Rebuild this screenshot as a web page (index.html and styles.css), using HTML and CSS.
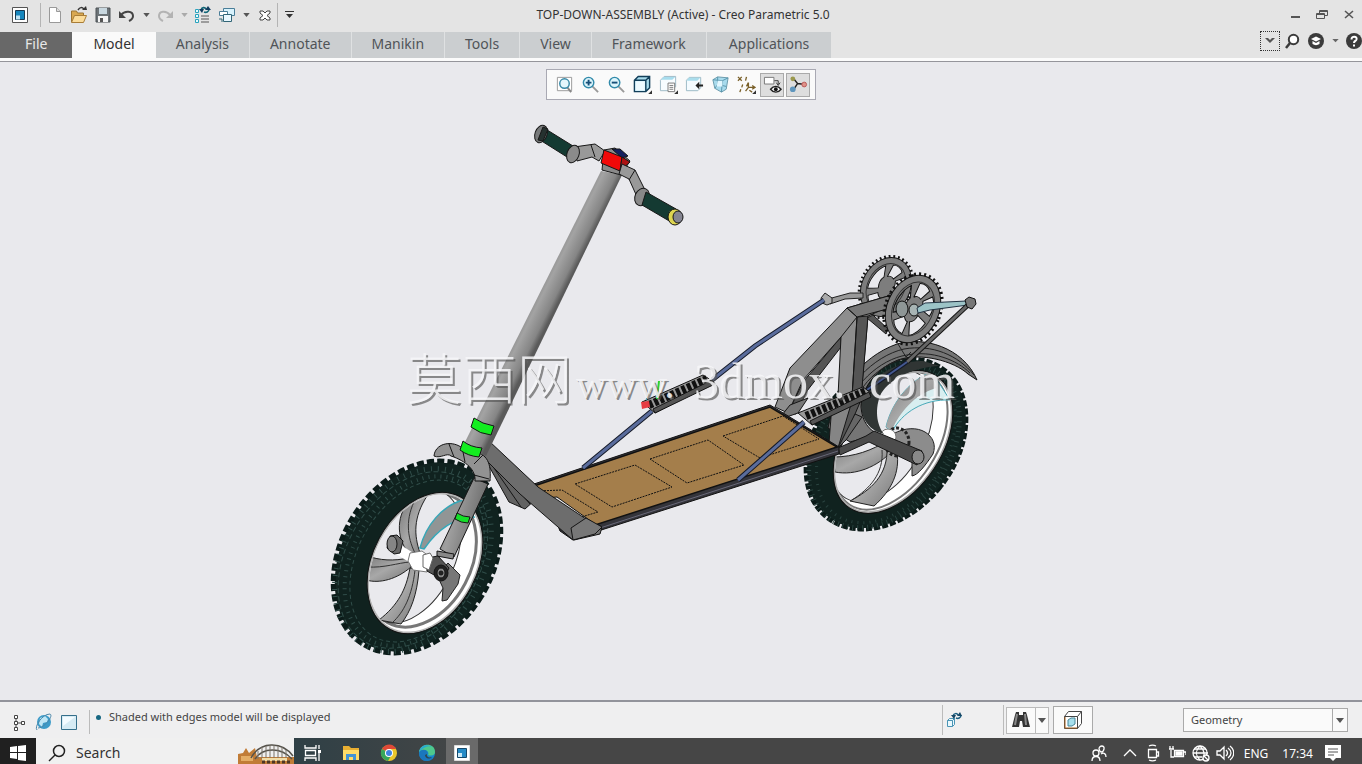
FILE: index.html
```html
<!DOCTYPE html>
<html lang="en">
<head>
<meta charset="utf-8">
<title>TOP-DOWN-ASSEMBLY (Active) - Creo Parametric 5.0</title>
<link rel="stylesheet" href="styles.css">
</head>
<body>
<div class="app">
  <header class="titlebar">
    <div class="quick">
      <button class="app-icon" aria-label="Application menu"><svg viewBox="0 0 18 18" width="18" height="18"><path d="M1.500 1.500h15v15h-15z" fill="#fff" stroke="#555"/><path d="M4.500 4.500h9v9h-9z" fill="#1686bd" stroke="#173a52"/><path d="M5 9.500h4v4H5z" fill="#bfe4f5"/></svg></button>
      <span class="rule"></span>
      <button class="tool" aria-label="New"><svg viewBox="0 0 18 18" width="18" height="18"><path d="M3.500 1.500h7l4 4v11h-11z" fill="#fff" stroke="#999"/><path d="M10.500 1.500v4h4" fill="#ddd" stroke="#999"/></svg></button>
      <button class="tool" aria-label="Open"><svg viewBox="0 0 18 18" width="18" height="18"><path d="M1.500 16V5h5l1 2h6v3" fill="#d9a850" stroke="#9b7432"/><path d="M1.500 16.500l3-7h12l-3 7z" fill="#fbdc9a" stroke="#a97d37"/><path d="M8 4c2-3 4-3 6-1" fill="none" stroke="#333" stroke-width="1.500"/><path d="M12 4h5l-1-4z" fill="#333"/></svg></button>
      <button class="tool" aria-label="Save"><svg viewBox="0 0 18 18" width="18" height="18"><path d="M2 2h14v14H2z" fill="#6c7377" stroke="#4d5357"/><path d="M5 2h8v6H5z" fill="#c8d7df"/><path d="M4 10h10v6H4z" fill="#f4f4f4"/><path d="M6 12h3v4H6z" fill="#555"/></svg></button>
      <button class="tool" aria-label="Undo"><svg viewBox="0 0 18 18" width="18" height="18"><path d="M3 9c4-5 12-4 12 1 0 3-2 4-4 5" fill="none" stroke="#444" stroke-width="2"/><path d="M1 5v7h7z" fill="#444"/></svg></button>
      <button class="drop" aria-label="Undo list"><svg viewBox="0 0 8 5" width="7" height="4"><path d="M0 0h8L4 5z" fill="#555"/></svg></button>
      <button class="tool" aria-label="Redo"><svg viewBox="0 0 18 18" width="18" height="18"><path d="M14 9C10 4 3 5 3 10c0 3 2 4 4 5" fill="none" stroke="#b3b3b3" stroke-width="2"/><path d="M17 5v7h-7z" fill="#b3b3b3"/></svg></button>
      <button class="drop" aria-label="Redo list"><svg viewBox="0 0 8 5" width="7" height="4"><path d="M0 0h8L4 5z" fill="#aaa"/></svg></button>
      <button class="tool" aria-label="Regenerate"><svg viewBox="0 0 18 18" width="18" height="18"><path d="M1.500 3.500h3v3h-3zM1.500 8.500h3v3h-3zM1.500 13.500h3v3h-3z" fill="#e8fbff" stroke="#2aa3bd"/><path d="M7 10h8M7 13h8M7 16h8" stroke="#555"/><path d="M7 4c1-3 4-3 5-1M15 3c0 3-3 4-5 3" fill="none" stroke="#167" stroke-width="1.600"/><path d="M11 4h6l-3-4zM5 3h5L8 7z" fill="#123e60"/></svg></button>
      <button class="tool" aria-label="Windows"><svg viewBox="0 0 18 18" width="18" height="18"><path d="M5.500 2.500h11v7h-11z" fill="#d8f2fc" stroke="#4a7e99"/><path d="M1.500 5.500h8v4h-8z" fill="#fff" stroke="#4a7e99"/><path d="M5.500 8.500h8v7h-8z" fill="#e9f8ff" stroke="#367"/><path d="M1 13h3v3" fill="none" stroke="#367"/></svg></button>
      <button class="drop" aria-label="Window list"><svg viewBox="0 0 8 5" width="7" height="4"><path d="M0 0h8L4 5z" fill="#555"/></svg></button>
      <button class="tool" aria-label="Close window"><svg viewBox="0 0 18 18" width="18" height="18"><path d="M4 5h3l2 2 2-2h3v2l-3 2.500 3 2.500v2h-3l-2-2-2 2H4v-2l3-2.500L4 7z" fill="#fff" stroke="#444"/></svg></button>
      <span class="rule short"></span>
      <button class="drop" aria-label="Customize"><svg viewBox="0 0 9 9" width="9" height="9"><path d="M0 1h9v1H0zM1 4h7L4.500 8z" fill="#333"/></svg></button>
    </div>
    <h1 class="title">TOP-DOWN-ASSEMBLY (Active) - Creo Parametric 5.0</h1>
    <div class="window-buttons">
      <button aria-label="Minimize"><svg viewBox="0 0 12 12" width="12" height="12"><path d="M2 8h9" stroke="#555" stroke-width="2"/></svg></button>
      <button aria-label="Restore"><svg viewBox="0 0 12 12" width="12" height="12"><path d="M3.500 4V1.500h8v5H9M.500 4.500h8v5h-8zM.500 5.500h8M3.500 2.500h8" fill="none" stroke="#555"/></svg></button>
      <button aria-label="Close"><svg viewBox="0 0 12 12" width="12" height="12"><path d="M2 2l8 7M10 2l-8 7" stroke="#555" stroke-width="1.600"/></svg></button>
    </div>
  </header>
  <nav class="ribbon">
    <div class="tabs">
      <button class="tab file">File</button><button class="tab active">Model</button><button class="tab">Analysis</button><button class="tab">Annotate</button><button class="tab">Manikin</button><button class="tab">Tools</button><button class="tab">View</button><button class="tab">Framework</button><button class="tab last">Applications</button>
    </div>
    <div class="ribbon-tools">
      <button class="collapse" aria-label="Show ribbon"><svg viewBox="0 0 12 8" width="12" height="8"><path d="M1 1h3l2 2 2-2h3L6 6z" fill="#555"/></svg></button>
      <button class="tool" aria-label="Search commands"><svg viewBox="0 0 16 16" width="16" height="16"><circle cx="9.500" cy="6.500" r="4.700" fill="#fff" stroke="#3b3b3b" stroke-width="2"/><path d="M6 10l-4 5" stroke="#3b3b3b" stroke-width="2.500"/></svg></button>
      <button class="tool" aria-label="Learning"><svg viewBox="0 0 16 16" width="16" height="16"><circle cx="8" cy="8" r="8" fill="#3b3b3b"/><path d="M8 3.500l5 2.500-5 2.500L3 6z" fill="#fff"/><path d="M4.500 8v3c2 1.500 5 1.500 7 0V8L8 10z" fill="#fff"/></svg></button>
      <button class="drop" aria-label="Learning list"><svg viewBox="0 0 8 5" width="7" height="4"><path d="M0 0h8L4 4z" fill="#666"/></svg></button>
      <button class="tool" aria-label="Help"><svg viewBox="0 0 16 16" width="16" height="16"><circle cx="8" cy="8" r="8" fill="#3b3b3b"/><path d="M5.500 6.500c0-4 6-3.500 5 0C10 8 8 8 8 10" fill="none" stroke="#fff" stroke-width="2"/><path d="M7 11.500h2v2H7z" fill="#fff"/></svg></button>
    </div>
  </nav>

  <main class="canvas">
    <svg class="model" viewBox="0 62 1362 638" role="img" aria-label="Scooter assembly">
      <defs>
        <linearGradient id="tube" x1="0" y1="0" x2="1" y2=".4"><stop offset="0" stop-color="#777"/><stop offset=".4" stop-color="#9f9f9f"/><stop offset="1" stop-color="#666"/></linearGradient>
        <linearGradient id="stem" gradientUnits="userSpaceOnUse" x1="532" y1="295" x2="556" y2="307"><stop offset="0" stop-color="#858585"/><stop offset=".35" stop-color="#a3a3a3"/><stop offset=".8" stop-color="#858585"/><stop offset="1" stop-color="#5a5a5a"/></linearGradient>
        <linearGradient id="blade" x1="0" y1="0" x2="1" y2="1"><stop offset="0" stop-color="#777"/><stop offset=".5" stop-color="#a8a8a8"/><stop offset="1" stop-color="#777"/></linearGradient>
        <clipPath id="front-open"><ellipse cx="425" cy="563" rx="50" ry="73" transform="rotate(28 425 563)"/></clipPath>
        <clipPath id="rear-open"><ellipse cx="893" cy="442" rx="47" ry="77" transform="rotate(33.500 893 442)"/></clipPath>
        <g id="ring">
          <ellipse rx="27" ry="36" fill="none" stroke="#111" stroke-width="4" stroke-dasharray="2 3"/>
          <path fill-rule="evenodd" d="M-26 0a26 35 0 1 0 52 0a26 35 0 1 0-52 0zM-4-26C0-28 5-27 8-23L3-12C0-14-3-13-4-11zM13-19C18-14 19-5 18 0L8-3C8-7 7-9 6-11zM17 8C15 17 11 23 7 26L2 13C5 12 7 8 7 4zM0 27C-6 27-11 23-13 18L-5 10C-3 13-1 14 0 14zM-17 11C-20 2-18-13-11-21L-7-9C-9-5-9 0-7 5z" fill="#7d7d7d" stroke="#111"/>
          <ellipse rx="20" ry="28" fill="none" stroke="#333"/>
        </g>
      </defs>

      <!-- rear wheel -->
      <g>
        <ellipse cx="886" cy="444" rx="68" ry="93" transform="rotate(39 886 444)" fill="#10221f" stroke="#0b1a18" stroke-width="7" stroke-dasharray="6 2"/>
        <ellipse cx="887" cy="444" rx="68" ry="93" transform="rotate(39 887 444)" fill="#10221f"/>
        <g fill="none" stroke="#29433f">
          <ellipse cx="884" cy="446" rx="64" ry="91" transform="rotate(38 884 446)" stroke-width="5" stroke-dasharray="1 4"/>
          <ellipse cx="886" cy="445" rx="59" ry="86" transform="rotate(36 886 445)" stroke-width="3" stroke-dasharray="1 5"/>
        </g>
        <ellipse cx="893" cy="442" rx="49" ry="79" transform="rotate(33.500 893 442)" fill="#aaa" stroke="#111"/>
        <g clip-path="url(#rear-open)">
          <path d="M820 350h150v180H820z" fill="#fff"/>
          <ellipse cx="891" cy="441" rx="46" ry="76" transform="rotate(33 891 441)" fill="none" stroke="#777" stroke-width="2"/>
          <ellipse cx="882" cy="436" rx="42" ry="72" transform="rotate(30 882 436)" fill="#e9e9ed" stroke="#333"/>
          <path d="M886 427C892 400 913 378 932 372L950 400C924 399 902 412 892 432z" fill="#d8eef0" stroke="#48a9b8"/>
          <path d="M886 427C892 400 913 378 932 372L936 388C914 395 900 412 892 430z" fill="url(#blade)"/>
          <path d="M833 457C855 457 872 450 887 441L893 450C878 467 855 476 835 472z" fill="url(#blade)" stroke="#222"/>
          <path d="M887 448C888 475 871 490 850 501L874 506C892 490 900 472 897 452z" fill="url(#blade)" stroke="#222"/>
          <path d="M882 450C884 474 869 489 852 500" fill="none" stroke="#333"/>
          <path d="M893 434C918 420 940 436 933 454C925 466 918 475 912 476L912 460 900 449z" fill="#8c8c8c" stroke="#222"/>
          <ellipse cx="897" cy="442" rx="12" ry="14" fill="none" stroke="#222" stroke-width="3" stroke-dasharray="3 2"/>
          <ellipse cx="888" cy="437" rx="8" ry="8" fill="#fff" stroke="#777"/>
        </g>
        <path d="M863 393C872 376 900 360 923 361L940 366C910 367 886 382 880 396 874 412 878 427 884 434 862 429 858 407 863 393z" fill="#303534"/>
      </g>

      <!-- mudguard -->
      <path d="M828 428C835 393 860 357 897 344 923 336 963 347 977 380L968 374C954 361 920 352 898 360 875 369 861 390 861 407 862 421 869 431 879 434L850 442z" fill="#757575" stroke="#111"/>
      <path d="M834 423C843 388 873 356 904 349 932 344 958 355 974 375M844 418C850 386 880 359 907 355 932 350 957 360 970 373M853 417C852 388 884 360 910 358" fill="none" stroke="#222"/>

      <!-- cranks behind the frame -->
      <use href="#ring" transform="translate(886 287) rotate(28) scale(.920 .880)"/>
      <path d="M863 293L850 293 828 299 830 304 845 299 863 298z" fill="#999" stroke="#222"/>
      <path d="M821 298l4-5 7 5 0 5-5 2-5-2z" fill="#aaa" stroke="#222"/>

      <!-- rear frame -->
      <g stroke="#161616" stroke-linejoin="round">
        <path d="M803 382L841 337 841 347 807 391 796 414 788 413z" fill="#555"/>
        <path d="M847 308L790 368 775 407 788 413 803 380 841 337 838 396 829 443 839 447 856 408 862 385 868 316 895 304 895 294z" fill="#8e8e8e"/>
        <path d="M857 317L868 316 861 400 841 447 834 446 852 397z" fill="#555"/>
        <path d="M847 308L857 317 891 308 895 294z" fill="#777"/>
        <path d="M847 308L857 317 852 397M841 337L857 317" fill="none"/>
        <path d="M867 318L886 334 888 329 873 315z" fill="#555"/>
        <path d="M798 413L778 420 790 405 808 398z" fill="#777"/>
        <path d="M829 443L832 404 852 401 838 448z" fill="#858585"/>
        <path d="M855 414L862 417 846 440 838 448z" fill="#666"/>
        <path d="M838 448L866 436 874 431 922 451 917 465 869 442 840 455z" fill="#4c4c4c"/>
        <ellipse cx="918" cy="457" rx="6" ry="7" fill="#888"/>
      </g>
      <use href="#ring" transform="translate(913 309) rotate(24)"/>
      <ellipse cx="902" cy="309" rx="6" ry="8" fill="#8e9696" stroke="#111"/>
      <ellipse cx="914" cy="310" rx="5" ry="6" fill="#a8b4b4" stroke="#111"/>
      <path d="M917 308L925 303 967 301 968 305 930 310 918 313z" fill="#9cc3c7" stroke="#234"/>
      <path d="M968 305L907 362" stroke="#151515" stroke-width="5"/><path d="M968 305L907 362" stroke="#666" stroke-width="3"/>
      <path d="M907 362L864 392" stroke="#151a28" stroke-width="4"/><path d="M907 362L864 392" stroke="#435890" stroke-width="2"/>
      <path d="M965 300l4-3 6 2 1 5-4 5-5-2z" fill="#777" stroke="#111"/>
      <path d="M898 344l8 13 5-5" fill="none" stroke="#222"/>

      <!-- deck -->
      <g stroke="#111">
        <path d="M545 493L531 485 770 405 839 447 839 454 595 532 573 540 560 531z" fill="#34343a"/>
        <path d="M572 523L586 517 602 527 600 534 574 540z" fill="#777"/>
        <path d="M531 487L770 407 837 447 595 525z" fill="#a47e4b" stroke-width="1.500"/>
        <path d="M545 498L557 497 592 522 573 521z" fill="#e9e9ed"/>
        <path d="M597 529L838 451" stroke="#686878"/>
        <g fill="none" stroke-dasharray="2 1"><path d="M575 484L635 465 672 487 612 507zM650 459L708 440 744 465 687 483zM723 436L783 416 819 439 760 458zM538 491L562 490 598 512 578 518"/></g>
      </g>

      <!-- pedals and connecting rods -->
      <g fill="none">
        <g stroke="#151a28" stroke-width="5"><path d="M824 300L755 346 712 380M652 411L583 468M804 422L738 480"/></g>
        <g stroke="#5a6c9c" stroke-width="3"><path d="M824 300L755 346 712 380M652 411L583 468M804 422L738 480"/></g>
      </g>
      <g stroke="#111">
        <path d="M642 402L703 375 714 382 655 413z" fill="#999"/>
        <path d="M798 413L863 387 871 393 812 425z" fill="#999"/>
        <path d="M649 405L707 379M806 416L866 391" stroke-width="8" stroke-dasharray="4 2"/>
        <path d="M655 413L715 384 712 380 653 409zM812 425L871 397 869 392 810 421z" fill="#555"/>
      </g>
      <path d="M641 402l8-1 1 6-8 2z" fill="#e63b42"/><path d="M657 399L659 381" stroke="#30d330" stroke-width="2"/><path d="M646 400L651 388" stroke="#4fa3ba"/>

      <!-- front wheel -->
      <ellipse cx="417" cy="557" rx="74" ry="101" transform="rotate(31.500 417 557)" fill="#10221f" stroke="#0b1b19" stroke-width="8" stroke-dasharray="7 3"/>
      <ellipse cx="418" cy="557" rx="74" ry="101" transform="rotate(31.500 418 557)" fill="#10221f"/>
      <g fill="none" stroke="#304d49">
        <ellipse cx="413" cy="560" rx="70" ry="98" transform="rotate(31 413 560)" stroke-width="5" stroke-dasharray="1 6"/>
        <ellipse cx="413" cy="560" rx="66" ry="95" transform="rotate(31 413 560)" stroke-dasharray="5 3"/>
        <ellipse cx="415" cy="561" rx="62" ry="91" transform="rotate(30 415 561)" stroke-width="4" stroke-dasharray="1 5"/>
        <ellipse cx="417" cy="561" rx="59" ry="87" transform="rotate(30 417 561)" stroke-dasharray="4 3"/>
      </g>
      <ellipse cx="425" cy="563" rx="52" ry="75" transform="rotate(28 425 563)" fill="#b5b5b5" stroke="#111"/>
      <g clip-path="url(#front-open)">
        <path d="M360 485h130v155H360z" fill="#fff"/>
        <ellipse cx="421" cy="560" rx="50" ry="71" transform="rotate(28 421 560)" fill="none" stroke="#777" stroke-width="3"/>
        <ellipse cx="412" cy="556" rx="43" ry="71" transform="rotate(25 412 556)" fill="#e9e9ed" stroke="#333"/>
        <path d="M408 502L427 496C413 518 414 535 420 553L411 556C396 540 396 518 408 502z" fill="url(#blade)" stroke="#222"/>
        <path d="M416 498C405 518 407 537 415 553" fill="none" stroke="#333"/>
        <path d="M365 555C380 561 394 561 409 558L411 567C397 579 380 584 366 580z" fill="url(#blade)" stroke="#222"/>
        <path d="M367 567C385 568 397 563 410 562" fill="none" stroke="#333"/>
        <path d="M410 568L419 570C417 595 411 611 401 624L379 620C398 605 406 590 410 568z" fill="url(#blade)" stroke="#222"/>
        <path d="M415 570C412 596 404 612 392 623" fill="none" stroke="#333"/>
        <path d="M448 563L460 575 458 584 447 600 442 601 443 588 437 575z" fill="#777" stroke="#222"/>
        <path d="M420 548C426 525 442 506 463 500L474 517C450 518 435 533 424 549z" fill="#919595" stroke="#36a7b8" stroke-width="1.500"/>
      </g>
      <g stroke="#161616">
        <path d="M396 548L412 558" stroke="#fff" stroke-width="10"/>
        <path d="M390 536l7-1 6 6-3 12-6 1-7-6z" fill="#686868"/><ellipse cx="392" cy="544" rx="5" ry="8" fill="#858585"/>
        <path d="M410 553L422 551 430 557 427 572 413 570 408 561z" fill="#fff" stroke="#777"/>
        <path d="M474 478L488 484 454 557 440 549z" fill="url(#tube)"/>
        <path d="M437 551l17 3-1 5-16-3z" fill="#888"/>
        <path d="M427 558L438 556 449 568 443 580 427 571z" fill="#555"/>
        <path d="M423 555L430 553 433 558 429 570 423 567z" fill="#fff" stroke="#666"/>
        <ellipse cx="441" cy="573" rx="7" ry="8" fill="#222"/><ellipse cx="441" cy="573" rx="4" ry="5" fill="#888"/><circle cx="441" cy="573" r="2" fill="#222"/>
        <path d="M457 513Q463 517 470 517L468 523Q461 523 455 519z" fill="#14df28"/>
      </g>

      <!-- front frame -->
      <g stroke="#151515" stroke-linejoin="round">
        <path d="M480 450L509 502 525 509 535 500 495 460z" fill="#626262"/>
        <path d="M485 455L521 507M488 455L530 504" fill="none"/>
        <path d="M482 438L489 441 538 487 586 519 573 540 520 494 478 452z" fill="#6d6d6d"/>
        <path d="M571 528L586 518 602 527 595 534 573 540z" fill="#777"/>
        <path d="M434 456C435 444 450 440 461 447L474 452C490 454 491 468 490 481L475 481C476 470 466 461 451 456 447 452 441 459 434 456z" fill="#929292"/>
        <path d="M449 444L454 457M462 447L465 462M483 455L474 464M474 475L489 479" fill="none"/>
        <path d="M601 171L622 175 486 456 463 446z" fill="url(#stem)" stroke="none"/>
        <path d="M474 418Q482 424 494 426L491 435Q480 434 471 427z" fill="#13ed20"/>
        <path d="M463 441Q470 447 482 448L479 457Q468 456 460 450z" fill="#13ed20"/>
      </g>

      <!-- handlebar -->
      <g stroke="#171717" stroke-linejoin="round">
        <path d="M544 128L573 146 567 157 540 140z" fill="#143a32"/>
        <ellipse cx="541" cy="134" rx="6" ry="9" transform="rotate(20 541 134)" fill="#77797a"/><path d="M543 127l5 2-5 12-5-1z" fill="#25312f"/>
        <path d="M574 147L595 144 605 151 599 161 592 157 577 161z" fill="#999"/><path d="M591 145L595 157" fill="none"/>
        <ellipse cx="573" cy="154" rx="6" ry="9" transform="rotate(20 573 154)" fill="#8b8b8b"/>
        <path d="M604 150L615 148 630 161 621 175 602 170z" fill="#8a8a8a"/>
        <path d="M612 149L620 149 628 156 622 158z" fill="#14205f"/>
        <path d="M604 150L622 157 620 171 601 163z" fill="#f20909"/><path d="M622 157L630 162 620 171z" fill="#ad1111"/>
        <path d="M622 164L635 170 645 190 638 199 629 179 619 174z" fill="#999"/><path d="M635 170L629 180" fill="none"/>
        <ellipse cx="642" cy="197" rx="7" ry="9" transform="rotate(25 642 197)" fill="#888"/>
        <path d="M646 192L676 209 671 222 642 205z" fill="#143a32"/>
        <ellipse cx="675" cy="217" rx="7" ry="8" fill="#ddd450"/><ellipse cx="678" cy="217" rx="5" ry="6" fill="#858591"/>
      </g>

      <g class="watermark shadow" aria-hidden="true"><text x="409" y="401" class="cjk">莫西网</text><text x="578" y="400" class="small">www.</text><text x="696" y="400">3dmox.</text><text x="871" y="400">com</text></g>
      <g class="watermark"><text x="407" y="399" class="cjk">莫西网</text><text x="576" y="398" class="small">www.</text><text x="694" y="398">3dmox.</text><text x="869" y="398">com</text></g>
    </svg>

    <div class="view-tools">
      <button aria-label="Refit"><svg viewBox="0 0 20 20"><path d="M2.500 2.500h15v14h-15z" fill="#fff" stroke="#999"/><path d="M13 13l4 5" stroke="#888" stroke-width="2"/><circle cx="10" cy="9" r="5" fill="#e4f7fd" stroke="#3789a7" stroke-width="1.500"/></svg></button>
      <button aria-label="Zoom in"><svg viewBox="0 0 20 20"><path d="M12 12l6 6" stroke="#999" stroke-width="2"/><circle cx="8" cy="8" r="5.500" fill="#ddf5fc" stroke="#318aaa" stroke-width="1.500"/><path d="M5 8h6M8 5v6" stroke="#164f78" stroke-width="2"/></svg></button>
      <button aria-label="Zoom out"><svg viewBox="0 0 20 20"><path d="M12 12l6 6" stroke="#999" stroke-width="2"/><circle cx="8" cy="8" r="5.500" fill="#ddf5fc" stroke="#318aaa" stroke-width="1.500"/><path d="M5 8h6" stroke="#164f78" stroke-width="2"/></svg></button>
      <button aria-label="Display style"><svg viewBox="0 0 20 20"><path d="M1.500 5.500l4-4h12v12l-4 4h-12zM1.500 5.500h12v12M13.500 5.500l4-4" fill="#a9dced" stroke="#123f5a" stroke-width="1.500"/><path d="M2.500 6.500h10v10h-10z" fill="#eefaff"/><path d="M20 16v4h-4z" fill="#333"/></svg></button>
      <button aria-label="Saved orientations"><svg viewBox="0 0 20 20"><path d="M1.500 5.500l4-4h12v11l-4 4h-12z" fill="#f7fcff" stroke="#9cb7c5"/><path d="M5 2h12l-3 3H2z" fill="#a7dced"/><path d="M9.500 8.500h7v9h-7z" fill="#fff" stroke="#777"/><path d="M11 11h4M11 13h4M11 15h4" stroke="#777"/><path d="M20 16v4h-4z" fill="#333"/></svg></button>
      <button aria-label="View manager"><svg viewBox="0 0 20 20"><path d="M1.500 5.500l3-3h12v11l-3 3h-12z" fill="#f4fbff" stroke="#9bb9c5"/><path d="M4 3h12l-3 3H2z" fill="#aaddec"/><path d="M11 11l4-4v3h4v2h-4v3z" fill="#222"/></svg></button>
      <button aria-label="Perspective"><svg viewBox="0 0 20 20"><path d="M2 5l5-3 11 1-2 12-5 3-7-4z" fill="#a8dbed" stroke="#6798aa"/><path d="M2 5l10 1-1 12M12 6l6-3M7 2v8l-3 4M7 10l9 2" fill="none" stroke="#5795ac"/><path d="M7 6h5v6H6z" fill="#e2f7ff"/></svg></button>
      <button aria-label="Datum display"><svg viewBox="0 0 20 20"><path d="M1 2l4 4M5 2L1 6M10 2l-1 4M6 10l-1 3M4 15l-1 3M12 8l-2 4M9 17l3-4h6M12 13V8M16 11l3 2-3 2M13 16l3 2" fill="none" stroke="#7a6029" stroke-width="1.400"/><path d="M20 16v4h-4z" fill="#333"/></svg></button>
      <button class="on" aria-label="Annotation display"><svg viewBox="0 0 20 20"><path d="M1.500 2.500h10v7h-10z" fill="#fff" stroke="#777"/><path d="M12 6h4v4M14 8l2 3 2-3" fill="none" stroke="#333"/><path d="M8 15c3-4 8-4 11 0-3 4-8 4-11 0z" fill="#fff" stroke="#222" stroke-width="1.500"/><circle cx="13.500" cy="15" r="2" fill="#111"/></svg></button>
      <button class="on" aria-label="Spin center"><svg viewBox="0 0 20 20"><path d="M5 4l4 5-4 6M9 9l8 1" fill="none" stroke="#222" stroke-width="1.500"/><circle cx="4" cy="4" r="2.500" fill="#9b994d"/><circle cx="4" cy="15" r="3" fill="#5f96bd"/><circle cx="16" cy="10" r="2.500" fill="#df9288" stroke="#b55"/></svg></button>
    </div>
  </main>

  <footer class="status">
    <div class="status-icons">
      <button aria-label="Model tree"><svg viewBox="0 0 16 18" width="16" height="18"><path d="M3.500 2.500h3v3h-3zM3.500 8.500h3v3h-3zM3.500 14.500h3v3h-3zM10.500 8.500h3v3h-3z" fill="#fff" stroke="#444"/><path d="M5 6v2M5 12v2M7 10h3" stroke="#444"/></svg></button>
      <button aria-label="Browser"><svg viewBox="0 0 18 18" width="18" height="18"><circle cx="9" cy="9" r="7" fill="#3d9bc8"/><path d="M5 5l5-2 3 3-1 3-4 1-1 4-3-3z" fill="#bfe6f5"/><path d="M2 17C-1 14 7 1 15 1c4 2-6 14-12 14" fill="none" stroke="#4a87aa"/></svg></button>
      <button aria-label="Full screen"><svg viewBox="0 0 18 18" width="18" height="18"><path d="M1.500 2.500h15v14h-15z" fill="#d6ebf4" stroke="#356f8b"/><path d="M3 4h12L3 13z" fill="#f3fbff"/></svg></button>
    </div>
    <p class="message"><span class="dot"></span>Shaded with edges model will be displayed</p>
    <div class="status-tools">
      <div class="regen"><button aria-label="Regeneration status"><svg viewBox="0 0 18 18" width="18" height="18"><path d="M1.500 9.500l2-2h5v6l-2 2h-5zM1.500 9.500h5v6M6.500 9.500l2-2" fill="#eaf8fd" stroke="#4994b5"/><path d="M7 5c1-3 4-3 5-1M15 4c0 3-3 4-5 3" fill="none" stroke="#185c7f" stroke-width="1.500"/><path d="M11 5h5l-2-4zM5 4h5L8 8z" fill="#164766"/></svg></button></div>
      <div class="find"><button aria-label="Find"><svg viewBox="0 0 18 18" width="18" height="18"><path d="M4 1h3v3h4V1h3l1 3 3 12h-7l-1-6H8l-1 6H0L3 4z" fill="#333"/><path d="M5 3L3 14M13 3l1 11" stroke="#888" stroke-width="2"/></svg></button><button class="find-drop" aria-label="Find options"><svg viewBox="0 0 8 5" width="8" height="5"><path d="M0 0h8L4 5z" fill="#555"/></svg></button></div>
      <button class="box" aria-label="Selection box"><svg viewBox="0 0 20 20" width="20" height="20"><path d="M1.500 6.500l4-5h13v12l-4 5h-13zM1.500 6.500h13v12M14.500 6.500l4-5" fill="#fff" stroke="#444"/><path d="M5 10l3-2h4v6l-3 2H5z" fill="#a7dfec" stroke="#478496"/><path d="M2 18h12M2 7v11" stroke="#a96523"/></svg></button>
      <div class="filter"><select aria-label="Selection filter"><option>Geometry</option></select><span class="filter-arrow"><svg viewBox="0 0 8 5" width="8" height="5"><path d="M0 0h8L4 5z" fill="#555"/></svg></span></div>
    </div>
  </footer>

  <div class="taskbar">
    <button class="start" aria-label="Start"><svg viewBox="0 0 16 16" width="16" height="16"><path d="M0 2l7-1v6H0zM8 1l8-1v7H8zM0 8h7v6l-7-1zM8 8h8v8l-8-1z" fill="#fff"/></svg></button>
    <label class="search"><svg viewBox="0 0 18 18" width="18" height="18"><circle cx="11" cy="7" r="5.500" fill="none" stroke="#222" stroke-width="1.500"/><path d="M7 11l-6 6" stroke="#222" stroke-width="1.500"/></svg><input type="text" placeholder="Search" aria-label="Search"><svg class="bridge" viewBox="0 0 56 20" width="56" height="20"><path d="M0 20V10l5-1 3-5 3 5 6-5 2 9h37v7z" fill="#c17c36"/><path d="M3 12h12v5H3z" fill="#e4ad65"/><path d="M13 14C22-3 44-3 55 12M17 15C25 3 43 3 54 15" fill="none" stroke="#55524b" stroke-width="1.500"/><path d="M20 7v8M24 3v12M28 2v12M32 1v13M36 1v13M40 2v12M44 3v12M48 6v9" stroke="#7a746b"/><path d="M24 14h25v3H24z" fill="#f1dda7"/><path d="M24 18h30" stroke="#4d3726" stroke-width="3" stroke-dasharray="3 2"/></svg></label>
    <div class="tasks">
      <button aria-label="Task view"><svg viewBox="0 0 18 18" width="18" height="18"><path d="M1 1v3h11V1M1 17v-3h11v3M1.500 6.500h10v5h-10zM15 1v4M15 9v8" fill="none" stroke="#fff" stroke-width="1.300"/><path d="M14 6h3v3h-3z" fill="#fff"/></svg></button>
      <button aria-label="File Explorer"><svg viewBox="0 0 18 18" width="18" height="18"><path d="M1 2h6l2 2h8v12H1z" fill="#e9af32"/><path d="M1 6h16v10H1z" fill="#ffdc68"/><path d="M4 10h10v6h-3v-3H7v3H4z" fill="#4394d5"/></svg></button>
      <button aria-label="Chrome"><svg viewBox="0 0 18 18" width="18" height="18"><circle cx="9" cy="9" r="8" fill="#eac62c"/><path d="M9 9L2 5C5-1 14-1 16 5H9z" fill="#df4937"/><path d="M9 9L2 5c-3 5 0 11 6 12l4-7z" fill="#36a65a"/><circle cx="9" cy="9" r="4" fill="#fff"/><circle cx="9" cy="9" r="3" fill="#3e83df"/></svg></button>
      <button aria-label="Edge"><svg viewBox="0 0 18 18" width="18" height="18"><circle cx="9" cy="9" r="8" fill="#1689cb"/><path d="M1 8C3-2 17-1 17 8c0 4-5 4-7 3 2-4-4-7-9-3z" fill="#4fc98c"/><path d="M1 8c2-8 10-8 13-5-5-2-9 1-13 5z" fill="#28a9d4"/><path d="M2 7c5-3 9 0 7 4 0 2 3 4 7 2-4 5-14 6-15-3z" fill="#1a77bd"/><path d="M9 10c-1 3 2 4 5 3-3 3-7 1-7-2z" fill="#30454f"/></svg></button>
      <button class="running" aria-label="Creo"><svg viewBox="0 0 18 18" width="18" height="18"><path d="M1.500 1.500h15v15h-15z" fill="#fff" stroke="#ddd"/><path d="M4.500 4.500h9v9h-9z" fill="#268bc6" stroke="#164869"/><path d="M5 9h4v4H5z" fill="#cae8f5"/></svg></button>
    </div>
    <div class="tray">
      <svg viewBox="0 0 18 18" width="18" height="18"><circle cx="6" cy="9" r="3"/><path d="M2 17c0-6 8-6 8 0M9 5c0-4 6-4 5 0-1 4-4 4-5 0M11 10c3-2 5 0 5 3"/></svg>
      <svg viewBox="0 0 18 18" width="18" height="18"><path d="M4 12l6-6 6 6"/></svg>
      <svg viewBox="0 0 18 18" width="18" height="18"><path d="M4.500 5.500h8v8h-8zM12.500 8h2v4h-2M5 2c2-1 5-1 7 0M5 16c2 1 5 1 7 0"/></svg>
      <svg viewBox="0 0 18 18" width="18" height="18"><path d="M6.500 6.500h9v6h-9zM16 8h2v3M1 5h5M2 2v3M5 2v3M3 6v7h3"/><path d="M8 8h6v3H8z" fill="#fff"/></svg>
      <svg viewBox="0 0 18 18" width="18" height="18"><circle cx="8" cy="9" r="7"/><path d="M1 9h15M8 2c-5 5-5 9 0 14M8 2c5 5 5 9 3 13M2 5h12M2 13h8"/><circle cx="14" cy="14" r="3" fill="#464646"/><path d="M12 12l4 4"/></svg>
      <svg viewBox="0 0 18 18" width="18" height="18"><path d="M1 7h3l4-4v12l-4-4H1zM10 6c2 2 2 4 0 6M12 4c4 3 4 7 0 10M14 2c5 4 5 10 0 14"/></svg>
      <span class="lang">ENG</span><time>17:34</time>
      <button class="note" aria-label="Notifications"><svg viewBox="0 0 18 18" width="18" height="18"><path d="M1 1h16v13h-5l-3 3-3-3H1z" fill="#fff"/><path d="M4 5h10M4 8h10M4 11h6" stroke="#555"/></svg></button>
    </div>
  </div>
</div>
</body>
</html>
```
FILE: styles.css
```css
* { box-sizing: border-box; }
body { margin: 0; font-family: "Noto Sans", "Open Sans", "Noto Sans CJK SC", sans-serif; font-size: 12px; color: #444; }
button { display: flex; align-items: center; justify-content: center; padding: 0; margin: 0; border: 0; background: none; font: inherit; color: inherit; flex: none; }
svg { display: block; flex: none; }
.app { display: flex; flex-direction: column; height: 100vh; overflow: hidden; background: #e4e4e4; }

.titlebar { display: grid; grid-template-columns: 1fr auto 1fr; align-items: center; height: 29px; flex: none; }
.quick { display: flex; align-items: center; height: 28px; }
.app-icon { width: 40px; height: 28px; }
.rule { width: 1px; height: 24px; margin-right: 2px; background: #b4b4b4; }
.rule.short { margin: 0 4px 0 0; }
.tool { width: 24px; height: 28px; }
.drop { width: 14px; height: 28px; }
.title { margin: 0; padding-left: 4px; font-size: 12px; line-height: 28px; font-weight: 400; color: #333; }
.window-buttons { display: flex; justify-content: flex-end; }
.window-buttons button { width: 27px; height: 28px; }

.ribbon { display: flex; justify-content: space-between; height: 33px; flex: none; padding-top: 3px; border-bottom: 1px solid #95959b; background: linear-gradient(#e4e4e4 29px, #fbfbfb 29px); }
.tabs { display: flex; height: 26px; }
.tab { padding: 0 20px 2px; border-right: 1px solid #dfe1e2; background: #cbced0; color: #505458; font-size: 14px; line-height: 20px; }
.tab.file { padding-left: 25px; padding-right: 25px; border: 0; background: #686868; color: #e8e8e8; }
.tab.active { background: #fafafa; height: 28px; padding: 0 21px 4px; color: #333; border: 0; }
.tab.last { padding-left: 22px; padding-right: 22px; border: 0; }
.ribbon-tools { display: flex; align-items: center; height: 18px; margin-right: -4px; }
.ribbon-tools .tool { height: 18px; }
.ribbon-tools .drop { height: 18px; }
.collapse { width: 20px; height: 20px; border: 1px dotted #333; }

.canvas { position: relative; flex: 1; min-height: 0; background: #e9e9ed; }
.model { position: absolute; inset: 0; width: 100%; height: 100%; }
.view-tools { position: relative; display: flex; gap: 2px; width: max-content; margin: 7px auto 0; padding: 0 5px; background: #fafafa; border: 1px solid #a9a9b3; height: 31px; align-items: center; }
.view-tools button { width: 24px; height: 24px; }
.view-tools svg { width: 19px; height: 19px; }
.view-tools .on { background: #dedede; border: 1px solid #aaa; }
.watermark text { font-family: "Liberation Serif", "Noto Sans CJK SC", serif; font-size: 50px; fill: #f7f7f9; }
.watermark .cjk { font-family: "Noto Sans CJK SC", sans-serif; font-size: 55px; font-weight: 300; }
.watermark .small { font-size: 42px; }
.watermark { opacity: .85; }
.watermark.shadow { opacity: .65; }
.watermark.shadow text { fill: #555; }

.status { display: flex; height: 38px; flex: none; align-items: center; border-top: 2px solid #92939b; background: #efeff0; }
.status-icons { display: flex; align-items: center; height: 24px; margin-top: 4px; padding-left: 6px; border-right: 1px solid #bbb; }
.status-icons button { width: 25px; height: 24px; }
.status-icons button:last-child { margin-right: 8px; }
.message { display: flex; align-items: center; gap: 8px; margin: 0 auto 6px 6px; font-size: 11px; line-height: 16px; color: #444; }
.dot { width: 5px; height: 5px; border-radius: 50%; background: #176782; }
.status-tools { display: flex; align-items: center; height: 32px; padding-right: 14px; }
.regen { width: 62px; height: 30px; padding: 3px; border: 1px solid #bbb; border-width: 0 1px; }
.regen button { height: 24px; }
.find { display: flex; align-items: center; height: 27px; margin: 0 4px 0 2px; border: 1px solid #bbb; background: #fafafa; }
.find button { width: 28px; height: 25px; }
.find .find-drop { width: 13px; border-left: 1px solid #bbb; }
.box { width: 40px; height: 28px; margin-right: 90px; border: 1px solid #aaa; background: #fafafa; }
.filter { position: relative; width: 165px; }
.filter select { appearance: none; width: 100%; height: 24px; padding: 0 7px; border: 1px solid #aaa; border-radius: 0; background: #fafafa; color: #444; font: 11px/20px "Noto Sans", sans-serif; }
.filter-arrow { position: absolute; top: 1px; right: 1px; width: 15px; height: 22px; display: grid; place-items: center; border-left: 1px solid #aaa; pointer-events: none; }

.taskbar { display: flex; height: 26px; flex: none; background: #464646; color: #fff; }
.start { width: 36px; height: 30px; background: #202020; }
.search { display: flex; align-items: center; width: 258px; padding: 3px 0 0 12px; background: #f0f0f0; }
.search input { flex: 1; min-width: 0; padding: 0 10px; border: 0; outline: 0; background: none; color: #333; font: 14px/20px "Noto Sans", sans-serif; }
.search input::placeholder { color: #333; opacity: 1; }
.bridge { align-self: flex-end; }
.tasks { display: flex; background: linear-gradient(90deg, #2f4046, #464646); }
.tasks button { width: 38px; height: 30px; }
.tasks .running { width: 32px; background: #6a6a6a; }
.tray { display: flex; align-items: center; gap: 6px; height: 30px; margin-left: auto; padding-right: 20px; }
.tray > svg { fill: none; stroke: #fff; stroke-width: 1.3; }
.tray > svg:first-child { margin-right: 6px; }
.lang { margin-left: 4px; }
.tray time { margin-left: 8px; }
.tray .note { margin-left: 5px; }
```
